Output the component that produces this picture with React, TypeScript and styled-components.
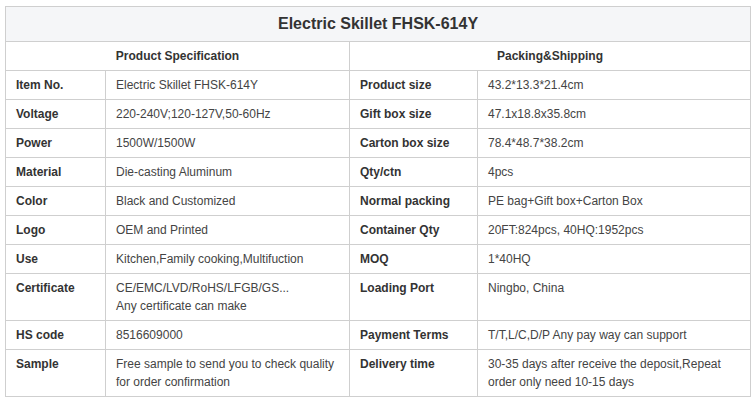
import React from "react";
import styled, { createGlobalStyle } from "styled-components";

const Global = createGlobalStyle`
  html, body { margin: 0; padding: 0; background: #fff; }
  body { font-family: "Liberation Sans", Arial, sans-serif; }
`;

const Page = styled.div`
  padding: 6px 6px 0 5px;
`;

const Table = styled.table`
  width: 745px;
  border-collapse: collapse;
  table-layout: fixed;
  font-size: 12px;
  color: #333;
`;

const TitleCell = styled.th`
  background: #f5f6f8;
  border: 1px solid #cfcfcf;
  font-size: 16px;
  font-weight: bold;
  color: #333;
  height: 34px;
  padding: 0;
  text-align: center;
  vertical-align: middle;
`;

const HeadCell = styled.th`
  border: 1px solid #cfcfcf;
  font-weight: bold;
  color: #333;
  padding: 5px 10px;
  line-height: 18px;
  text-align: center;
`;

const Cell = styled.td<{ $label?: boolean }>`
  border: 1px solid #cfcfcf;
  padding: 5px 10px;
  line-height: 18px;
  vertical-align: top;
  text-align: left;
  font-weight: ${(p) => (p.$label ? "bold" : "normal")};
  color: ${(p) => (p.$label ? "#333" : "#444")};
`;

type Row = [string, React.ReactNode, string, React.ReactNode];

const rows: Row[] = [
  ["Item No.", "Electric Skillet FHSK-614Y", "Product size", "43.2*13.3*21.4cm"],
  ["Voltage", "220-240V;120-127V,50-60Hz", "Gift box size", "47.1x18.8x35.8cm"],
  ["Power", "1500W/1500W", "Carton box size", "78.4*48.7*38.2cm"],
  ["Material", "Die-casting Aluminum", "Qty/ctn", "4pcs"],
  ["Color", "Black and Customized", "Normal packing", "PE bag+Gift box+Carton Box"],
  ["Logo", "OEM and Printed", "Container Qty", "20FT:824pcs, 40HQ:1952pcs"],
  ["Use", "Kitchen,Family cooking,Multifuction", "MOQ", "1*40HQ"],
  [
    "Certificate",
    <>
      CE/EMC/LVD/RoHS/LFGB/GS...
      <br />
      Any certificate can make
    </>,
    "Loading Port",
    "Ningbo, China",
  ],
  ["HS code", "8516609000", "Payment Terms", "T/T,L/C,D/P Any pay way can support"],
  [
    "Sample",
    "Free sample to send you to check quality for order confirmation",
    "Delivery time",
    "30-35 days after receive the deposit,Repeat order only need 10-15 days",
  ],
];

export default function App() {
  return (
    <Page>
      <Global />
      <Table>
        <colgroup>
          <col style={{ width: 100 }} />
          <col style={{ width: 244 }} />
          <col style={{ width: 128 }} />
          <col style={{ width: 273 }} />
        </colgroup>
        <thead>
          <tr>
            <TitleCell colSpan={4}>Electric Skillet FHSK-614Y</TitleCell>
          </tr>
          <tr>
            <HeadCell colSpan={2}>Product Specification</HeadCell>
            <HeadCell colSpan={2}>Packing&amp;Shipping</HeadCell>
          </tr>
        </thead>
        <tbody>
          {rows.map((r, i) => (
            <tr key={i}>
              <Cell $label>{r[0]}</Cell>
              <Cell>{r[1]}</Cell>
              <Cell $label>{r[2]}</Cell>
              <Cell>{r[3]}</Cell>
            </tr>
          ))}
        </tbody>
      </Table>
    </Page>
  );
}
